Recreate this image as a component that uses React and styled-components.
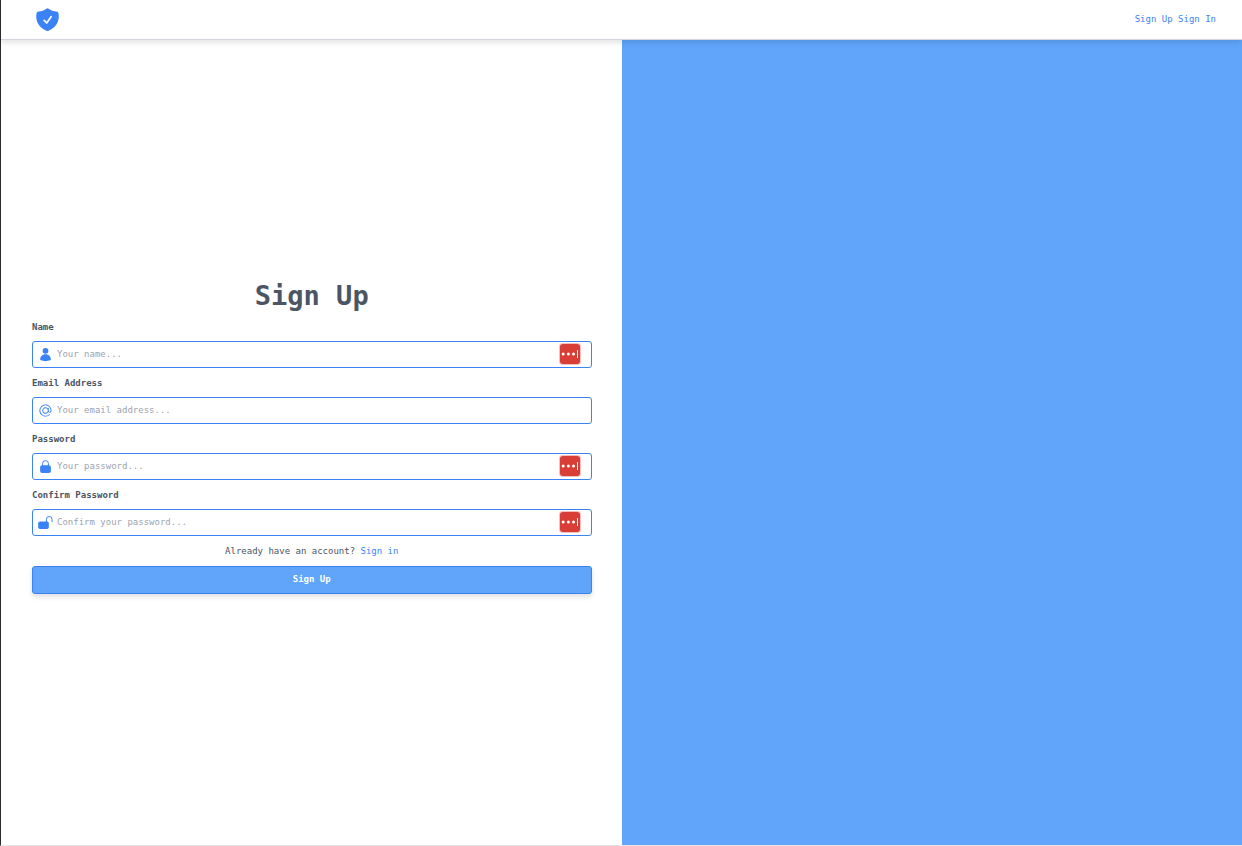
import React from "react";
import styled, { createGlobalStyle } from "styled-components";
import { HiAtSymbol } from "react-icons/hi2";

const GlobalStyle = createGlobalStyle`
  *, *::before, *::after { box-sizing: border-box; }
  body {
    margin: 0;
    font-family: "DejaVu Sans Mono", monospace;
    font-size: 9px;
    line-height: 14px;
    color: #4b5563;
    background: #fff;
  }
  a { color: #3b82f6; text-decoration: none; }
`;

const Page = styled.div`
  min-height: 100vh;
  display: flex;
  flex-direction: column;
  border-left: 1px solid #2b2b2f;
  border-bottom: 1px solid #e5e5e5;
`;

const Header = styled.header`
  position: relative;
  z-index: 1;
  display: flex;
  align-items: center;
  justify-content: space-between;
  height: 40px;
  padding: 0 26px 2px 33px;
  background: #fff;
  border-bottom: 1px solid #d1d5db;
  box-shadow: 0 3px 5px rgba(0, 0, 0, 0.1);
`;

const Logo = styled.a`
  display: flex;
  svg { width: 27px; height: 27px; }
`;

const Main = styled.main`
  flex: 1;
  display: grid;
  grid-template-columns: 1fr 1fr;
`;

const FormPane = styled.section`
  display: flex;
  flex-direction: column;
  justify-content: center;
  padding: 0 30px 12px 31px;
`;

const AccentPane = styled.div`
  background: #60a5fa;
`;

const Form = styled.form`
  display: flex;
  flex-direction: column;
`;

const Title = styled.h1`
  margin: 0 0 8px;
  font-size: 27px;
  line-height: 32px;
  text-align: center;
`;

const Field = styled.div`
  display: flex;
  flex-direction: column;
  gap: 7px;
  margin-bottom: 8px;
`;

const Label = styled.label`
  font-weight: bold;
`;

const InputBox = styled.div`
  display: flex;
  align-items: center;
  gap: 4px;
  height: 27px;
  padding: 0 10px 0 5px;
  border: 1px solid #3b82f6;
  border-radius: 3px;
  > svg { flex: none; width: 15px; height: 15px; color: #3b82f6; }
`;

const Input = styled.input`
  flex: 1;
  min-width: 0;
  padding: 0;
  border: 0;
  outline: 0;
  background: transparent;
  font: inherit;
  color: inherit;
  &::placeholder { color: #9ca3af; opacity: 1; }
`;

const FillButton = styled.button`
  display: flex;
  padding: 0;
  border: 0;
  background: none;
  svg { width: 22px; height: 22px; }
`;

const Prompt = styled.p`
  margin: 0 0 8px;
  text-align: center;
`;

const Submit = styled.button`
  height: 28px;
  padding: 0 0 2px;
  border: 1px solid #3b82f6;
  border-radius: 3px;
  background: #60a5fa;
  box-shadow: 0 3px 5px rgba(0, 0, 0, 0.12);
  color: #fff;
  font: inherit;
  font-weight: bold;
`;

function ShieldIcon() {
  return (
    <svg viewBox="0 0 27 27" aria-hidden="true">
      <path
        fill="#3b82f6"
        d="M12.4 3.7Q13.5 2.9 14.6 3.7C16.8 5.4 19.3 6.3 22.4 6.4Q24.2 6.5 24.5 8.2C25.1 12.2 24.8 15.6 22.7 18.9C20.8 22 17.9 24.3 14.6 25.7Q13.5 26.2 12.4 25.7C9.1 24.3 6.2 22 4.3 18.9C2.2 15.6 1.9 12.2 2.5 8.2Q2.8 6.5 4.6 6.4C7.7 6.3 10.2 5.4 12.4 3.7Z"
      />
      <path
        d="M10.2 15.4L12.7 18L17.1 11.7"
        fill="none"
        stroke="#fff"
        strokeWidth="1.7"
        strokeLinecap="round"
        strokeLinejoin="round"
      />
    </svg>
  );
}

function UserIcon() {
  return (
    <svg viewBox="0 0 15 15" fill="currentColor" aria-hidden="true">
      <circle cx="7.5" cy="3.8" r="2.9" />
      <path d="M7.5 7.2C10.7 7.2 12.7 9.4 12.8 12.4Q12.8 13 12.2 13.3C9.3 14.4 5.7 14.4 2.8 13.3Q2.2 13 2.2 12.4C2.3 9.4 4.3 7.2 7.5 7.2Z" />
    </svg>
  );
}

function LockIcon() {
  return (
    <svg viewBox="0 0 15 15" aria-hidden="true">
      <rect x="2.1" y="6.2" width="10.8" height="7.8" rx="2" fill="currentColor" />
      <path d="M4.6 7V4.5a2.9 2.9 0 0 1 5.8 0V7" fill="none" stroke="currentColor" />
    </svg>
  );
}

function LockOpenIcon() {
  return (
    <svg viewBox="0 0 15 15" aria-hidden="true">
      <rect x="0.2" y="6.4" width="10.6" height="7.6" rx="1.8" fill="currentColor" />
      <path
        d="M8.4 7V4.3a2.8 2.8 0 0 1 5.6 0V6.6"
        fill="none"
        stroke="currentColor"
        strokeLinecap="round"
      />
    </svg>
  );
}

function FillIcon() {
  return (
    <svg viewBox="0 0 22 22" aria-hidden="true">
      <rect width="22" height="22" rx="4" fill="#f3bfbd" />
      <rect x="1" y="1" width="20" height="20" rx="3" fill="#d93d38" />
      <g fill="#fff">
        <circle cx="4.2" cy="11" r="1.5" />
        <circle cx="9.4" cy="11" r="1.5" />
        <circle cx="14.5" cy="11" r="1.5" />
        <rect x="18" y="7" width="1" height="8" />
      </g>
    </svg>
  );
}

const fields = [
  { id: "name", label: "Name", type: "text", hint: "Your name...", Icon: UserIcon, fill: true },
  { id: "email", label: "Email Address", type: "email", hint: "Your email address...", Icon: HiAtSymbol },
  { id: "password", label: "Password", type: "password", hint: "Your password...", Icon: LockIcon, fill: true },
  { id: "confirm", label: "Confirm Password", type: "password", hint: "Confirm your password...", Icon: LockOpenIcon, fill: true },
];

export default function App() {
  return (
    <>
      <GlobalStyle />
      <Page>
        <Header>
          <Logo href="#" aria-label="Home"><ShieldIcon /></Logo>
          <nav>
            <a href="#sign-up">Sign Up</a> <a href="#sign-in">Sign In</a>
          </nav>
        </Header>
        <Main>
          <FormPane>
            <Form onSubmit={(e) => e.preventDefault()}>
              <Title>Sign Up</Title>
              {fields.map(({ id, label, type, hint, Icon, fill }) => (
                <Field key={id}>
                  <Label htmlFor={id}>{label}</Label>
                  <InputBox>
                    <Icon />
                    <Input id={id} type={type} placeholder={hint} />
                    {fill && (
                      <FillButton type="button" aria-label={`Fill ${label}`}>
                        <FillIcon />
                      </FillButton>
                    )}
                  </InputBox>
                </Field>
              ))}
              <Prompt>
                Already have an account? <a href="#sign-in">Sign in</a>
              </Prompt>
              <Submit type="submit">Sign Up</Submit>
            </Form>
          </FormPane>
          <AccentPane />
        </Main>
      </Page>
    </>
  );
}
